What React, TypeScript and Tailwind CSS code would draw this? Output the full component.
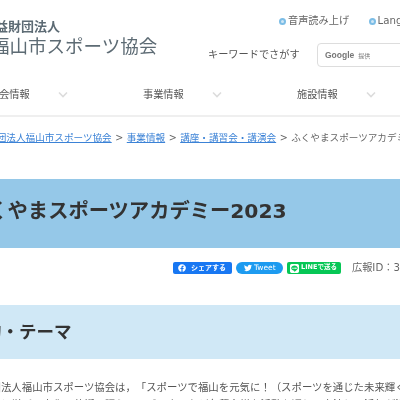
import { FaFacebook, FaTwitter } from "react-icons/fa";
import { FaLine } from "react-icons/fa6";

const font = { fontFamily: '"DejaVu Sans","Noto Sans CJK JP",sans-serif' };

function NavItem({ label }: { label: string }) {
  return (
    <div className="flex w-[154px] shrink-0 items-center pl-[57px]">
      <span className="w-[40px] shrink-0 whitespace-nowrap text-[10.2px] text-[#555]">{label}</span>
      <svg className="ml-[28px] shrink-0" width="12" height="8" viewBox="0 0 12 8" fill="none" stroke="#dcdcdc" strokeWidth="1.6">
        <path d="M2 1.5l4 4 4-4" />
      </svg>
    </div>
  );
}

function Dot() {
  return <span className="size-[7px] shrink-0 rounded-full border-2 border-[#7cbde6] bg-[#cfe6f5]" />;
}

function App() {
  return (
    <div className="h-[400px] w-[400px] overflow-hidden bg-white text-[#444] blur-[0.35px] [text-spacing-trim:space-all]" style={font}>
      <header className="h-[117px] border-b-2 border-[#efefef]">
        <div className="flex h-[82px]">
          <div className="-ml-[9px] w-[290px] shrink-0 pt-[18px] text-[#5d6b74]">
            <p className="-ml-[9px] whitespace-nowrap text-[13px] leading-[18px] font-bold">公益財団法人</p>
            <p className="-mt-[2px] whitespace-nowrap text-[18.5px] leading-[26px]">福山市スポーツ協会</p>
          </div>
          <div className="-ml-[2px] flex-1 pt-[14px]">
            <div className="flex items-center gap-[2px] text-[10.2px] leading-[14px] text-[#666]">
              <Dot />
              <span className="w-[78.5px] shrink-0 whitespace-nowrap">音声読み上げ</span>
              <Dot />
              <span className="whitespace-nowrap">Language</span>
            </div>
          </div>
        </div>
        <div className="-mt-[39px] ml-[208px] flex h-[24px] items-center">
          <span className="w-[109px] shrink-0 whitespace-nowrap text-[10.2px] text-[#555]">キーワードでさがす</span>
          <div className="flex h-[24px] w-[120px] shrink-0 items-center gap-[4px] rounded-[4px] border border-[#ddd] pl-[7px]">
            <span className="font-['Liberation_Sans',sans-serif] text-[8.5px] font-bold text-[#777]">Google</span>
            <span className="text-[6px] text-[#777]">提供</span>
          </div>
        </div>
        <nav className="-ml-[68px] mt-[17px] flex h-[22px] items-center">
          <NavItem label="協会情報" />
          <NavItem label="事業情報" />
          <NavItem label="施設情報" />
        </nav>
      </header>

      <div className="-ml-[32px] mt-[14px] flex h-[14px] items-center gap-[3.5px] whitespace-nowrap text-[9.6px] text-[#666]">
        <a className="text-[#3b82d6] underline">公益財団法人福山市スポーツ協会</a>
        <span>&gt;</span>
        <a className="text-[#3b82d6] underline">事業情報</a>
        <span>&gt;</span>
        <a className="text-[#3b82d6] underline">講座・講習会・講演会</a>
        <span>&gt;</span>
        <span>ふくやまスポーツアカデミー2023</span>
      </div>

      <div className="mt-[34px] flex h-[69px] items-center bg-[#95c8e8] pb-[5px]">
        <h1 className="-ml-[33px] whitespace-nowrap text-[20.3px] font-bold text-[#333]">ふくやまスポーツアカデミー2023</h1>
      </div>

      <div className="ml-[173px] mt-[14px] flex h-[12px] items-center gap-[4px] whitespace-nowrap">
        <a className="flex h-[12px] w-[59px] items-center gap-[5px] rounded-[2px] bg-[#1877f2] pl-[5px] text-[7px] font-bold text-white">
          <FaFacebook size={8} className="shrink-0" />
          シェアする
        </a>
        <a className="flex h-[12px] w-[47px] items-center gap-[2px] rounded-full bg-[#1d9bf0] pl-[8px] text-[7.5px] leading-[12px] text-white">
          <FaTwitter size={8} className="shrink-0" />
          Tweet
        </a>
        <a className="flex h-[12px] w-[54px] items-center gap-[2px] rounded-[2px] bg-[#06c755] pl-[3px] text-[6.5px] font-bold text-white">
          <FaLine size={9} className="shrink-0" />
          LINEで送る
        </a>
        <span className="ml-[7px] text-[10.2px] text-[#666]">広報ID：3</span>
      </div>

      <div className="mt-[31px] flex h-[54px] items-center bg-[#d0e8f6]">
        <h2 className="-ml-[86px] whitespace-nowrap text-[17.5px] font-bold text-[#333]">理念・目的・テーマ</h2>
      </div>

      <p className="-ml-[40.6px] mt-[20px] w-[900px] text-[10.4px] leading-[17px] text-[#555]">
        公益財団法人福山市スポーツ協会は，「スポーツで福山を元気に！（スポーツを通じた未来輝く人づくり）」
        <br />
        スポーツと学び、文化・芸術、語らい、ビジネスなど各種多様な活動を通して交流し、活気が溢れる
      </p>
    </div>
  );
}

export default App;
